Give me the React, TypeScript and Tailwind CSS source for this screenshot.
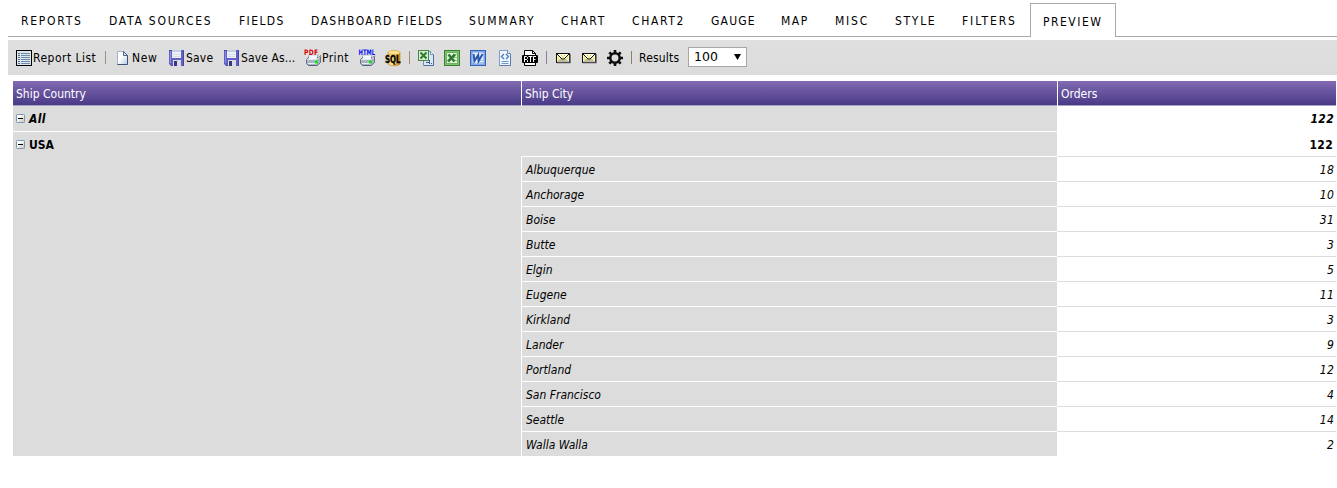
import React from "react";

const tabs = [
  { label: "REPORTS", cls: "w-[88px] tracking-[1.75px]" },
  { label: "DATA SOURCES", cls: "w-[130px] tracking-[1.75px]" },
  { label: "FIELDS", cls: "w-[72px] tracking-[1.4px]" },
  { label: "DASHBOARD FIELDS", cls: "w-[158px] tracking-[1.4px]" },
  { label: "SUMMARY", cls: "w-[92px] tracking-[1.75px]" },
  { label: "CHART", cls: "w-[71px] tracking-[1.75px]" },
  { label: "CHART2", cls: "w-[79px] tracking-[1.65px]" },
  { label: "GAUGE", cls: "w-[70px] tracking-[1.2px]" },
  { label: "MAP", cls: "w-[54px] tracking-[1.5px]" },
  { label: "MISC", cls: "w-[60px] tracking-[1.8px]" },
  { label: "STYLE", cls: "w-[67px] tracking-[1.7px]" },
  { label: "FILTERS", cls: "w-[81px] tracking-[1.9px]" },
];

const cities: [string, number][] = [
  ["Albuquerque", 18],
  ["Anchorage", 10],
  ["Boise", 31],
  ["Butte", 3],
  ["Elgin", 5],
  ["Eugene", 11],
  ["Kirkland", 3],
  ["Lander", 9],
  ["Portland", 12],
  ["San Francisco", 4],
  ["Seattle", 14],
  ["Walla Walla", 2],
];

function Icon({ children }: { children: React.ReactNode }) {
  return (
    <svg width="16" height="16" viewBox="0 0 16 16" className="block shrink-0 overflow-visible">
      {children}
    </svg>
  );
}

const ListIcon = () => (
  <Icon>
    <rect x=".5" y=".5" width="15" height="15" fill="#dce6ee" stroke="#000" />
    <path d="M2 3.5h2M2 5.5h2M2 7.5h2M2 9.5h2M2 11.5h2M2 13.5h2" stroke="#56708a" />
    <path d="M5 3.5h9M5 5.5h9M5 7.5h9M5 9.5h9M5 11.5h9M5 13.5h9" stroke="#6d8ba8" />
  </Icon>
);

const NewIcon = () => (
  <Icon>
    <defs>
      <linearGradient id="page" x1="0" y1="0" x2="1" y2="1">
        <stop offset=".4" stopColor="#fff" />
        <stop offset="1" stopColor="#b3c8e8" />
      </linearGradient>
    </defs>
    <path d="M2.5 1.5h6l4 4v9h-10z" fill="url(#page)" stroke="#a5b3c6" />
    <path d="M12.5 5v9.5h-10" fill="none" stroke="#3d5375" />
    <path d="M8.5 1.5v4h4z" fill="#dbe6f5" stroke="#49658d" />
  </Icon>
);

const SaveIcon = () => (
  <Icon>
    <path d="M0 0h15v16H2l-2-2z" fill="#625fc5" />
    <path d="M14.5 0v16M0 .5h3M2 15.5h2" stroke="#4a46a4" />
    <path d="M3 0h9v8H3z" fill="#eef1f7" />
    <path d="M3 0h9v2H3z" fill="#c3d0e2" />
    <path d="M4 4.5h7M4 6.5h7" stroke="#d6deea" />
    <path d="M4 10h8v6H4z" fill="#d8dbe4" />
    <path d="M5 11h3v5H5z" fill="#39367f" />
    <path d="M1.5 1v12" stroke="#8b91e3" />
  </Icon>
);

const Printer = ({ label }: { label: "PDF" | "HTML" }) => (
  <Icon>
    <path d="M4 5h9l-1 5H3z" fill="#f7faff" stroke="#8b99ac" />
    <path d="M1.5 9.5l2-2h10l2-2v7l-3 3h-9l-2-2z" fill="#a9b5c2" stroke="#65717f" />
    <path d="M4.5 5.5h8l-1 4h-8z" fill="#f4f8ff" />
    <path d="M2 9.5h10l3-3" stroke="#e2e9f0" fill="none" />
    <path d="M3 13.5h9" stroke="#e8eef3" />
    <path d="M3.5 15.5h8" stroke="#526070" />
    <rect x="10" y="10.5" width="3" height="3" fill="#1ddc25" />
    {label === "PDF" ? (
      <text x="-1" y="5" textLength="14.5" lengthAdjust="spacingAndGlyphs" fontSize="7.5" fontWeight="700" fontFamily="DejaVu Sans, sans-serif" fill="#d00000" stroke="#e4e4e4" strokeWidth="1.5" paintOrder="stroke">PDF</text>
    ) : (
      <text x="-.5" y="5" textLength="16.5" lengthAdjust="spacingAndGlyphs" fontSize="7.5" fontWeight="700" fontFamily="DejaVu Sans, sans-serif" fill="#0b13f0" stroke="#e0e0e8" strokeWidth="1" paintOrder="stroke">HTML</text>
    )}
  </Icon>
);

const SqlIcon = () => (
  <Icon>
    <defs>
      <linearGradient id="db" x1="0" x2="1">
        <stop offset="0" stopColor="#f4c44b" />
        <stop offset=".3" stopColor="#ffe9a3" />
        <stop offset="1" stopColor="#c77e0c" />
      </linearGradient>
    </defs>
    <path d="M3 2.5v11c0 3 12 3 12 0v-11z" fill="url(#db)" stroke="#c58c1e" strokeWidth=".7" />
    <ellipse cx="9" cy="2.6" rx="6" ry="2.1" fill="#ffe392" stroke="#d9a032" strokeWidth=".7" />
    <text x="0" y="13" textLength="15.5" lengthAdjust="spacingAndGlyphs" fontSize="10" fontWeight="700" fontFamily="DejaVu Sans Condensed, sans-serif" fill="#000" stroke="#000" strokeWidth=".3">SQL</text>
  </Icon>
);

const CsvIcon = () => (
  <Icon>
    <path d="M5.5 1.5h7l3 3v11h-10z" fill="#dbe7f8" stroke="#6f8fbb" />
    <path d="M12.5 1.5v3h3" fill="#fff" stroke="#6f8fbb" />
    <path d="M15.5 5v10.5h-9" fill="none" stroke="#4f6f9c" />
    <rect x=".5" y=".5" width="10" height="10" fill="#d5ebd0" stroke="#44893f" />
    <path d="M2.5 2.5l6 6M8.5 2.5l-6 6" stroke="#2f7b31" strokeWidth="2" />
    <path d="M8 12.5h3M11.5 10v4M13 13.5h1" stroke="#365c91" />
  </Icon>
);

const ExcelIcon = () => (
  <Icon>
    <rect x=".5" y=".5" width="15" height="15" fill="#6db35c" stroke="#35812f" />
    <rect x="1.5" y="1.5" width="13" height="13" fill="none" stroke="#7fbf6d" />
    <rect x="3" y="3" width="10" height="10" fill="#e2f1dc" />
    <path d="M9 4.5h4M10 7.5h3M10 10.5h3" stroke="#8fc580" />
    <path d="M4.5 4.5l6 7M11 4.5l-7 7" stroke="#2f7831" strokeWidth="2.6" />
  </Icon>
);

const WordIcon = () => (
  <Icon>
    <rect x=".5" y=".5" width="15" height="15" fill="#6c9ae2" stroke="#3363b7" />
    <rect x="1.5" y="1.5" width="13" height="13" fill="none" stroke="#80a8e8" />
    <rect x="2.5" y="2.5" width="11" height="11" fill="#e3edfd" />
    <path d="M9 10.5h4M9 12.5h4" stroke="#adc6ee" />
    <path d="M3.6 4l.8 7L8.2 5l.4 6 4-7" fill="none" stroke="#2859ae" strokeWidth="2" />
  </Icon>
);

const XmlIcon = () => (
  <Icon>
    <path d="M2.5.5h8l3 3v12h-11z" fill="#f0f6ff" stroke="#7d9fcb" />
    <path d="M10.5.5v3h3" fill="#fff" stroke="#6689b7" />
    <path d="M13.5 4v11.5h-11" fill="none" stroke="#587dad" />
    <path d="M7 4L4.5 6.5 7 9M9 4l2.5 2.5L9 9" fill="none" stroke="#3f76bd" strokeWidth="1.2" />
    <path d="M4.5 11.5h7M4.5 13.5h7" stroke="#6f98cb" />
  </Icon>
);

const RtfIcon = () => (
  <Icon>
    <path d="M2.5 6V.5h8l3 3V6M2.5 12v3.5h11V12" fill="#fff" stroke="#000" />
    <path d="M10.5.5v3h3" fill="none" stroke="#000" />
    <rect x="0" y="5" width="16" height="8" rx="1" fill="#000" />
    <path d="M2.5 12V6.5H4.5L5.5 7.5v1l-1 1h-2M4.5 9.5l1 1V12M6.5 6.5h4M8.5 6.5V12M11.5 12V6.5H14M11.5 9.5h2" fill="none" stroke="#fff" />
  </Icon>
);

const MailIcon = () => (
  <Icon>
    <rect x="1.5" y="3.5" width="13" height="9" fill="#f8f5bd" stroke="#111" />
    <path d="M2 12.5h13V4" fill="none" stroke="#4d4d4d" strokeWidth="1.3" />
    <path d="M2 12l4-4 2 1.5L10 8l4 4z" fill="#b9b9ad" />
    <path d="M2 4l5 5h2l5-5" fill="#fffef0" stroke="#111" />
    <path d="M3 8h1M12 8h1M5 10h1M10 10h1M6 5.500h1M9 5.500h1M7 7h2M3 10h1" stroke="#e3d800" />
  </Icon>
);

const GearIcon = () => (
  <Icon>
    <circle cx="8" cy="8" r="4.7" fill="none" stroke="#0c0c0c" strokeWidth="2.5" />
    <g stroke="#0c0c0c" strokeWidth="2.6">
      <path d="M8 0v3M8 13v3M0 8h3M13 8h3" />
      <path d="M2.3 2.3l2.2 2.2M11.5 11.5l2.2 2.2M2.3 13.7l2.2-2.2M11.5 4.5l2.2-2.2" />
    </g>
  </Icon>
);

const Separator = ({ cls }: { cls: string }) => <span className={`h-[13px] w-px shrink-0 ${cls}`} />;

const Toggle = () => (
  <svg width="9" height="9" viewBox="0 0 9 9" className="block shrink-0">
    <defs>
      <linearGradient id="tog" x1="0" y1="0" x2="1" y2="1">
        <stop offset=".3" stopColor="#fff" />
        <stop offset="1" stopColor="#c9c0b0" />
      </linearGradient>
    </defs>
    <rect x=".5" y=".5" width="8" height="8" rx=".8" fill="url(#tog)" stroke="#7898b5" />
    <path d="M2 4.5h5" stroke="#000" />
  </svg>
);

function Tool({ icon, label, cls }: { icon: React.ReactNode; label?: string; cls: string }) {
  return (
    <span className={`flex shrink-0 items-center gap-px whitespace-nowrap ${cls}`}>
      {icon}
      {label && <span className="pt-px">{label}</span>}
    </span>
  );
}

export default function App() {
  return (
    <div className="h-[488px] w-[1337px] overflow-hidden bg-white pl-2 font-['DejaVu_Sans_Condensed','DejaVu_Sans',sans-serif] font-stretch-condensed text-black">
      <nav className="flex h-[37px] text-[12px]">
        {tabs.map((t) => (
          <div key={t.label} className={`flex shrink-0 items-center border-b border-[#a9a9a9] pt-[5px] pl-[13px] whitespace-nowrap ${t.cls}`}>
            {t.label}
          </div>
        ))}
        <div className="mt-[3px] flex w-[86px] shrink-0 items-center border border-b-0 border-[#a9a9a9] pt-[3px] pl-3 tracking-[1.5px]">
          PREVIEW
        </div>
        <div className="grow border-b border-[#a9a9a9]" />
      </nav>

      <div className="mt-[3px] flex h-[35px] items-center bg-gradient-to-b from-[#e0e0e0] to-[#dbdbdb] pl-2 text-[12px]">
        <Tool icon={<ListIcon />} label="Report List" cls="w-[89px] gap-[2px] tracking-[0.48px]" />
        <Separator cls="mr-[9px] bg-[#8a9a80]" />
        <Tool icon={<NewIcon />} label="New" cls="w-[54px] tracking-[0.6px]" />
        <Tool icon={<SaveIcon />} label="Save" cls="w-[55px] tracking-[0.2px]" />
        <Tool icon={<SaveIcon />} label="Save As..." cls="w-[81px] tracking-[0.1px]" />
        <Tool icon={<Printer label="PDF" />} label="Print" cls="w-[54px] tracking-[0.4px]" />
        <Tool icon={<Printer label="HTML" />} cls="w-[26px]" />
        <Tool icon={<SqlIcon />} cls="w-6" />
        <Separator cls="mr-2 bg-[#a58a70]" />
        <Tool icon={<CsvIcon />} cls="w-[26px]" />
        <Tool icon={<ExcelIcon />} cls="w-[26px]" />
        <Tool icon={<WordIcon />} cls="w-[27px]" />
        <Tool icon={<XmlIcon />} cls="w-[25px]" />
        <Tool icon={<RtfIcon />} cls="w-6" />
        <Separator cls="mr-2 bg-[#8f7f98]" />
        <Tool icon={<MailIcon />} cls="w-[26px]" />
        <Tool icon={<MailIcon />} cls="w-[26px]" />
        <Tool icon={<GearIcon />} cls="w-6" />
        <Separator cls="mr-[7px] bg-[#8a8070]" />
        <span className="w-[49px] tracking-[0.2px]">Results</span>
        <div className="-mt-0.5 flex h-5 w-[59px] items-center justify-between border border-[#a6a6a6] bg-white pt-px pr-[5px] pl-[5px] font-['DejaVu_Sans',sans-serif] font-stretch-normal text-[12.5px]">
          100
          <svg width="7" height="6" viewBox="0 0 7 6">
            <path d="M0 0h7L3.5 6z" />
          </svg>
        </div>
      </div>

      <div className="mt-1.5 ml-[5px] w-[1323px] text-[12px]">
        <div className="flex h-[25px] text-white">
          <div className="flex w-[508px] items-center border-b border-[#aaa3c0] bg-gradient-to-b from-[#826bb3] to-[#4a3a87] pt-[2px] pl-[3px]">Ship Country</div>
          <div className="ml-px flex w-[535px] items-center border-b border-[#aaa3c0] bg-gradient-to-b from-[#826bb3] to-[#4a3a87] pt-[2px] pl-[3px]">Ship City</div>
          <div className="ml-px flex grow items-center border-b border-[#aaa3c0] bg-gradient-to-b from-[#826bb3] to-[#4a3a87] pt-[2px] pl-[3px]">Orders</div>
        </div>
        <div className="flex h-[25px] font-bold italic">
          <div className="flex w-[1044px] items-center gap-1 bg-[#dcdcdc] pl-[3px] tracking-[0.3px]">
            <Toggle />
            All
          </div>
          <div className="flex grow items-center justify-end pr-0.5 tracking-[0.3px]">122</div>
        </div>
        <div className="mt-px flex h-6 font-bold">
          <div className="flex w-[1044px] items-center gap-1 bg-[#dcdcdc] pl-[3px]">
            <Toggle />
            <span className="pt-[2px]">USA</span>
          </div>
          <div className="flex grow items-center justify-end pt-[2px] pr-[3px] tracking-[0.3px]">122</div>
        </div>
        <div className="flex">
          <div className="w-[508px] bg-[#dcdcdc]" />
          <div className="w-[815px] italic">
            {cities.map(([city, orders]) => (
              <div key={city} className="flex h-[25px]">
                <div className="flex w-[536px] items-center border-t border-l border-white bg-[#dcdcdc] pt-[2px] pl-1">{city}</div>
                <div className="flex grow items-center justify-end border-t border-[#dcdcdc] pt-[2px] pr-0.5 tracking-[0.2px]">{orders}</div>
              </div>
            ))}
          </div>
        </div>
      </div>
    </div>
  );
}
